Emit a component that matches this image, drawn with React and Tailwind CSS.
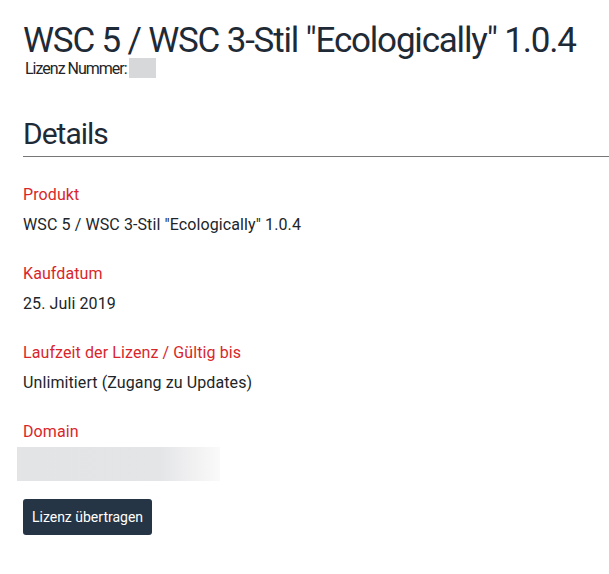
export default function App() {
  return (
    <div className="min-h-[574px] bg-white pl-[23px] pt-[21px] text-[#212529]" style={{ fontFamily: "Roboto, 'Liberation Sans', sans-serif" }}>
      <h1 className="whitespace-nowrap text-[35px] leading-[39px] tracking-[-1.2px] text-[#1f2a37]">WSC 5 / WSC 3-Stil "Ecologically" 1.0.4</h1>
      <div className="flex items-start pl-[2px] text-[16px] leading-[18px] tracking-[-1px]">
        <span>Lizenz Nummer:</span>
        <span className="-mt-[2px] ml-[2px] inline-block h-[20px] w-[27px] bg-[#d7d8da]"></span>
      </div>
      <h2 className="mt-[38px] text-[30px] leading-[36px] tracking-[-1px] text-[#1f2a37]">Details</h2>
      <div className="mt-[4px] h-px bg-[#777]"></div>
      <div className="mt-[26px] flex flex-col tracking-[0.1px]">
        <div className="text-[16px] leading-[24px] text-[#d9262b]">Produkt</div>
        <div className="mt-[6px] text-[16px] leading-[24px]">WSC 5 / WSC 3-Stil "Ecologically" 1.0.4</div>
        <div className="mt-[25px] text-[16px] leading-[24px] text-[#d9262b]">Kaufdatum</div>
        <div className="mt-[6px] text-[16px] leading-[24px]">25. Juli 2019</div>
        <div className="mt-[25px] text-[16px] leading-[24px] text-[#d9262b]">Laufzeit der Lizenz / Gültig bis</div>
        <div className="mt-[6px] text-[16px] leading-[24px]">Unlimitiert (Zugang zu Updates)</div>
        <div className="mt-[25px] text-[16px] leading-[24px] text-[#d9262b]">Domain</div>
        <div className="-ml-[6px] mt-[3px] h-[34px] w-[203px] bg-gradient-to-r from-[#e3e4e6] via-[#e4e5e7] via-70% to-[#fafafa]"></div>
        <div className="mt-[18px]">
          <button className="h-[36px] w-[129px] rounded-[3px] bg-[#263545] text-[14px] tracking-normal text-white">Lizenz übertragen</button>
        </div>
      </div>
    </div>
  );
}
